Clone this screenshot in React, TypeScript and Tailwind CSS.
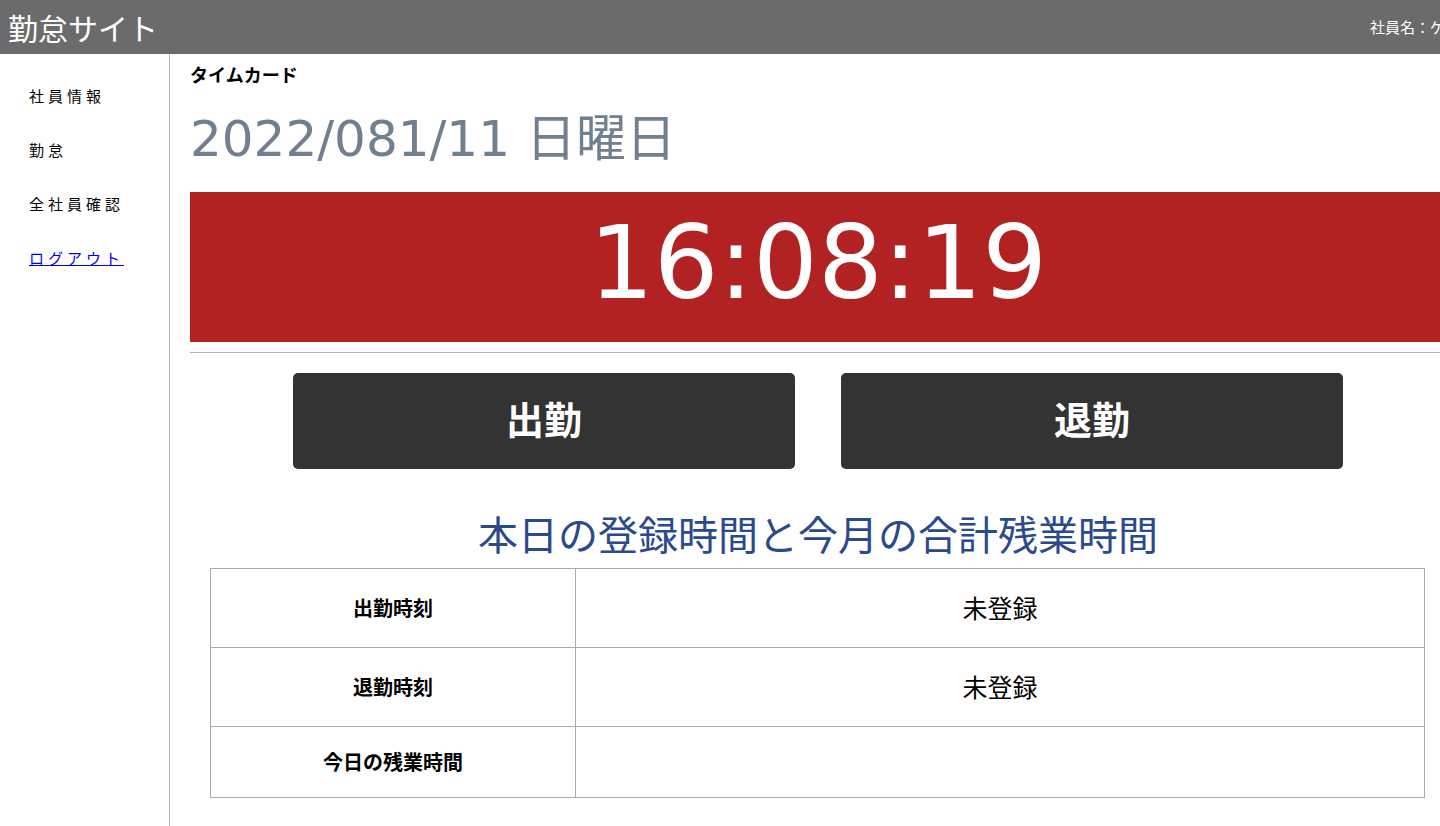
const jp = "font-['Noto_Sans_CJK_JP','Noto_Sans',sans-serif]";
const latin = "font-['DejaVu_Sans','Noto_Sans_CJK_JP',sans-serif]";

const navItems = ["社員情報", "勤怠", "全社員確認"];

const rows = [
  { label: "出勤時刻", value: "未登録", h: "h-[79px]" },
  { label: "退勤時刻", value: "未登録", h: "h-[79px]" },
  { label: "今日の残業時間", value: "", h: "h-[71px]" },
];

export default function App() {
  return (
    <div className={`w-[1440px] h-[826px] overflow-hidden bg-white text-black ${jp}`}>
      {/* header */}
      <div className="w-[1490px] h-[54px] bg-[#6b6b6b] flex items-center text-white">
        <div className="pl-[8px] text-[30px] leading-none">勤怠サイト</div>
        <div className="ml-auto pr-[15px] text-[15px] whitespace-nowrap">社員名：ゲスト</div>
      </div>

      <div className="flex w-[1466px] h-[772px]">
        {/* sidebar */}
        <div className="w-[170px] shrink-0 border-r border-[#b4b4b4] pt-[31px] pl-[29px]">
          <ul className="flex flex-col gap-[32px] text-[15px] tracking-[4px] leading-[22px]">
            {navItems.map((item) => (
              <li key={item}>{item}</li>
            ))}
            <li>
              <a href="#" className="text-[#0000ee] underline">
                ログアウト
              </a>
            </li>
          </ul>
        </div>

        {/* main */}
        <div className="flex-1 px-[20px] pt-[7px]">
          <div className="text-[18px] font-bold leading-[26px]">タイムカード</div>
          <div className={`mt-[19px] text-[50px] leading-[66px] text-[#708090] ${latin}`}>2022/081/11 日曜日</div>
          <div
            className={`mt-[20px] h-[150px] pb-[8px] bg-[#b22222] flex items-center justify-center text-white text-[102px] leading-none ${latin}`}
          >
            16:08:19
          </div>
          <hr className="mt-[10px] border-t border-[#b4b4b4]" />
          <div className="mt-[20px] flex justify-center gap-[46px]">
            <button className="w-[502px] h-[96px] pb-[6px] rounded-[5px] bg-[#333333] text-white text-[38px] leading-none font-bold">
              出勤
            </button>
            <button className="w-[502px] h-[96px] pb-[6px] rounded-[5px] bg-[#333333] text-white text-[38px] leading-none font-bold">
              退勤
            </button>
          </div>
          <div className="mt-[39px] text-center text-[40px] leading-[50px] text-[#2b4a8b]">
            本日の登録時間と今月の合計残業時間
          </div>
          <table className="mt-[10px] ml-[20px] w-[1215px] border-collapse border border-[#aaaaaa]">
            <tbody>
              {rows.map((r) => (
                <tr key={r.label} className={r.h}>
                  <th className="w-[365px] border border-[#aaaaaa] text-[20px] font-bold">{r.label}</th>
                  <td className="border border-[#aaaaaa] text-center text-[25px]">{r.value}</td>
                </tr>
              ))}
            </tbody>
          </table>
        </div>
      </div>
    </div>
  );
}
